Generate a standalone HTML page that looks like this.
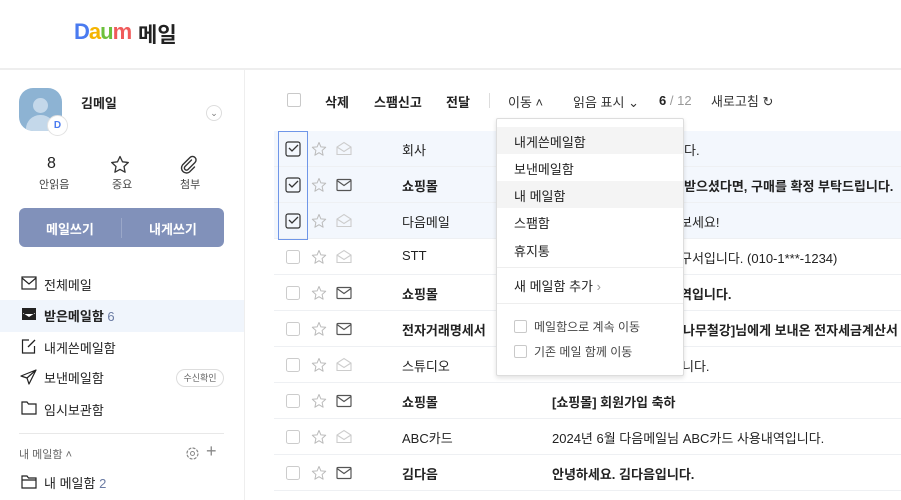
<!DOCTYPE html>
<html><head><meta charset="utf-8"><style>
*{margin:0;padding:0;box-sizing:border-box}
body{width:901px;height:500px;overflow:hidden;background:#fff;font-family:"Liberation Sans","Noto Sans CJK KR",sans-serif;color:#222;position:relative;font-size:14px}
.a{position:absolute;white-space:nowrap}
.row{position:absolute;left:274px;width:627px;height:36px;border-bottom:1px solid #eef0f3}
.sel{background:#f3f7fd}
.b{font-weight:bold}
.cb{position:absolute;width:14px;height:14px;border:1px solid #c9c9c9;border-radius:2px}
.menu div.i{position:absolute;left:17px;font-size:13px}
</style></head><body>
<div class="a" style="left:74px;top:19px;font-size:22px;font-weight:900;letter-spacing:-1px"><span style="color:#4a7bf0">D</span><span style="color:#f5b400">a</span><span style="color:#6cc03c">u</span><span style="color:#f05a5a">m</span></div>
<div class="a b" style="left:138px;top:19px;font-size:21px">메일</div>
<div class="a" style="left:0;top:68px;width:901px;height:2px;background:#eee"></div>
<div class="a" style="left:244px;top:70px;width:1px;height:430px;background:#eee"></div>
<div class="a" style="left:19px;top:88px;width:43px;height:43px;border-radius:14px;background:#8db3d3;overflow:hidden">
<div class="a" style="left:14px;top:10px;width:15px;height:15px;border-radius:50%;background:#c4d8ea"></div>
<div class="a" style="left:7px;top:27px;width:29px;height:22px;border-radius:14px 14px 0 0;background:#c4d8ea"></div></div>
<div class="a" style="left:47px;top:115px;width:21px;height:21px;border-radius:50%;background:#fff;border:1px solid #e2e2e2;font-size:10px;font-weight:bold;color:#4a7bf0;text-align:center;line-height:19px">D</div>
<div class="a b" style="left:81px;top:93px;font-size:13px">김메일</div>
<div class="a" style="left:206px;top:105px;width:16px;height:16px;border-radius:50%;border:1px solid #ddd;font-size:9px;color:#777;text-align:center;line-height:14px">⌄</div>
<div class="a" style="left:47px;top:155px;font-size:16px">8</div>
<div class="a" style="left:39px;top:176px;font-size:11px;color:#444">안읽음</div>
<svg class="a" style="left:110px;top:155px" width="20" height="19" viewBox="0 0 20 19"><path d="M10 1.5l2.5 5.3 5.8.7-4.3 4 1.1 5.7L10 14.4l-5.1 2.8 1.1-5.7-4.3-4 5.8-.7z" fill="none" stroke="#333" stroke-width="1.3" stroke-linejoin="round"/></svg>
<div class="a" style="left:112px;top:176px;font-size:11px;color:#444">중요</div>
<svg class="a" style="left:179px;top:155px" width="20" height="19" viewBox="0 0 20 19"><path d="M12.5 5L6 11.5a2 2 0 0 0 3 3L16 7.5a3.5 3.5 0 0 0-5-5L3.5 10a5 5 0 0 0 7 7l5-5" fill="none" stroke="#333" stroke-width="1.4" stroke-linecap="round"/></svg>
<div class="a" style="left:180px;top:176px;font-size:11px;color:#444">첨부</div>
<div class="a" style="left:19px;top:208px;width:205px;height:39px;border-radius:6px;background:#8191ba"></div>
<div class="a" style="left:121px;top:218px;width:1px;height:20px;background:#9aa7c8"></div>
<div class="a b" style="left:46px;top:219px;color:#fff;font-size:13px">메일쓰기</div>
<div class="a b" style="left:149px;top:219px;color:#fff;font-size:13px">내게쓰기</div>
<div class="a" style="left:0;top:300px;width:244px;height:32px;background:#f0f5fc"></div>
<svg class="a" style="left:21px;top:276px" width="16" height="14"><rect x="1" y="1" width="14" height="12" fill="none" stroke="#222" stroke-width="1.2"/><path d="M1 2l7 6 7-6" fill="none" stroke="#222" stroke-width="1.2"/></svg>
<div class="a" style="left:44px;top:275px;font-size:13px">전체메일</div>
<svg class="a" style="left:21px;top:307px" width="16" height="14"><rect x="1" y="1" width="14" height="12" fill="#222"/><path d="M2 6l6 4 6-4v1H2z" fill="#fff"/></svg>
<div class="a b" style="left:44px;top:306px;font-size:13px">받은메일함 <span style="color:#6a7ba3;font-weight:normal">6</span></div>
<svg class="a" style="left:21px;top:338px" width="16" height="16"><path d="M8 2H1.5v13h12V8" fill="none" stroke="#222" stroke-width="1.2"/><path d="M7 9l7-7" stroke="#222" stroke-width="1.3"/></svg>
<div class="a" style="left:44px;top:338px;font-size:13px">내게쓴메일함</div>
<svg class="a" style="left:20px;top:369px" width="17" height="16"><path d="M16 1L1 7l6 2 2 6z M7 9l9-8" fill="none" stroke="#222" stroke-width="1.2" stroke-linejoin="round"/></svg>
<div class="a" style="left:44px;top:368px;font-size:13px">보낸메일함</div>
<div class="a" style="left:176px;top:369px;width:48px;height:18px;border:1px solid #ddd;border-radius:9px;font-size:9px;color:#666;text-align:center;line-height:16px">수신확인</div>
<svg class="a" style="left:21px;top:401px" width="16" height="14"><path d="M1 1h5l1.5 2H15v10H1z" fill="none" stroke="#222" stroke-width="1.2"/></svg>
<div class="a" style="left:44px;top:400px;font-size:13px">임시보관함</div>
<div class="a" style="left:19px;top:433px;width:205px;height:1px;background:#e8e8e8"></div>
<div class="a" style="left:19px;top:446px;font-size:11px;color:#666">내 메일함 ˄</div>
<svg class="a" style="left:185px;top:446px" width="15" height="15"><circle cx="7.5" cy="7.5" r="5.5" fill="none" stroke="#888" stroke-width="1.2" stroke-dasharray="3 1.3"/><circle cx="7.5" cy="7.5" r="2" fill="none" stroke="#888"/></svg>
<div class="a" style="left:206px;top:441px;font-size:18px;color:#888">+</div>
<svg class="a" style="left:21px;top:475px" width="16" height="14"><path d="M1 1h5l1.5 2H15v10H1z M1 5h14" fill="none" stroke="#222" stroke-width="1.2"/></svg>
<div class="a" style="left:44px;top:473px;font-size:13px">내 메일함 <span style="color:#6a7ba3">2</span></div>
<div class="cb" style="left:287px;top:93px"></div>
<div class="a b" style="left:325px;top:92px;font-size:13px">삭제</div>
<div class="a b" style="left:374px;top:92px;font-size:13px">스팸신고</div>
<div class="a b" style="left:446px;top:92px;font-size:13px">전달</div>
<div class="a" style="left:489px;top:93px;width:1px;height:15px;background:#ddd"></div>
<div class="a" style="left:508px;top:92px;font-size:13px;color:#333">이동 ˄</div>
<div class="a" style="left:573px;top:92px;font-size:13px;color:#333">읽음 표시 ⌄</div>
<div class="a" style="left:659px;top:93px;font-size:13px"><b>6</b> <span style="color:#999">/ 12</span></div>
<div class="a" style="left:711px;top:91px;font-size:13px;color:#333">새로고침 ↻</div>
<div class="row sel" style="top:131px"></div>
<div class="row sel" style="top:167px"></div>
<div class="row sel" style="top:203px"></div>
<div class="row" style="top:239px"></div>
<div class="row" style="top:275px"></div>
<div class="row" style="top:311px"></div>
<div class="row" style="top:347px"></div>
<div class="row" style="top:383px"></div>
<div class="row" style="top:419px"></div>
<div class="row" style="top:455px"></div>
<div class="a" style="left:278px;top:131px;width:30px;height:109px;border:1px solid #6f96e8"></div>
<svg class="a" style="left:0;top:0" width="901" height="500">
<defs>
<g id="st"><path d="M0 -7 L1.9 -2.6 L6.7 -2.2 L3.1 1 L4.1 5.7 L0 3.2 L-4.1 5.7 L-3.1 1 L-6.7 -2.2 L-1.9 -2.6 Z" transform="translate(0,0.5)" fill="none" stroke="#bbb" stroke-width="1" stroke-linejoin="round"/></g>
<g id="ec"><rect x="-7" y="-5.5" width="14" height="11" rx="1" fill="none" stroke="#555" stroke-width="1.2"/><path d="M-7-4.5l7 5 7-5" fill="none" stroke="#555" stroke-width="1.2"/></g>
<g id="eo"><path d="M-7-2v7.5h14V-2l-7-4.5z M-7-2l7 4.5 7-4.5" fill="none" stroke="#ccc" stroke-width="1.1"/></g>
<g id="ck"><rect x="-7" y="-7" width="14" height="14" rx="2" fill="none" stroke="#333" stroke-width="1.2"/><path d="M-4-1l3 3 6-6" fill="none" stroke="#333" stroke-width="1.3"/></g>
<g id="cu"><rect x="-6.5" y="-6.5" width="13" height="13" rx="2" fill="none" stroke="#ccc" stroke-width="1"/></g>
</defs>
<use href="#ck" x="293" y="149"/><use href="#st" x="319" y="149"/><use href="#eo" x="344" y="149"/>
<use href="#ck" x="293" y="185"/><use href="#st" x="319" y="185"/><use href="#ec" x="344" y="185"/>
<use href="#ck" x="293" y="221"/><use href="#st" x="319" y="221"/><use href="#eo" x="344" y="221"/>
<use href="#cu" x="293" y="257"/><use href="#st" x="319" y="257"/><use href="#eo" x="344" y="257"/>
<use href="#cu" x="293" y="293"/><use href="#st" x="319" y="293"/><use href="#ec" x="344" y="293"/>
<use href="#cu" x="293" y="329"/><use href="#st" x="319" y="329"/><use href="#ec" x="344" y="329"/>
<use href="#cu" x="293" y="365"/><use href="#st" x="319" y="365"/><use href="#eo" x="344" y="365"/>
<use href="#cu" x="293" y="401"/><use href="#st" x="319" y="401"/><use href="#ec" x="344" y="401"/>
<use href="#cu" x="293" y="437"/><use href="#st" x="319" y="437"/><use href="#eo" x="344" y="437"/>
<use href="#cu" x="293" y="473"/><use href="#st" x="319" y="473"/><use href="#ec" x="344" y="473"/>
</svg>
<div class="a" style="left:402px;top:140px;font-size:13px">회사</div>
<div class="a b" style="left:402px;top:176px;font-size:13px">쇼핑몰</div>
<div class="a" style="left:402px;top:212px;font-size:13px">다음메일</div>
<div class="a" style="left:402px;top:248px;font-size:13px">STT</div>
<div class="a b" style="left:402px;top:284px;font-size:13px">쇼핑몰</div>
<div class="a b" style="left:402px;top:320px;font-size:13px">전자거래명세서</div>
<div class="a" style="left:402px;top:356px;font-size:13px">스튜디오</div>
<div class="a b" style="left:402px;top:392px;font-size:13px">쇼핑몰</div>
<div class="a" style="left:402px;top:428px;font-size:13px">ABC카드</div>
<div class="a b" style="left:402px;top:464px;font-size:13px">김다음</div>
<div class="a" style="left:684px;top:140px;font-size:13px">다.</div>
<div class="a b" style="left:684px;top:176px;font-size:13px">받으셨다면, 구매를 확정 부탁드립니다.</div>
<div class="a" style="left:680px;top:212px;font-size:13px">보세요!</div>
<div class="a" style="left:680px;top:248px;font-size:13px">구서입니다. (010-1***-1234)</div>
<div class="a b" style="left:680px;top:284px;font-size:13px">역입니다.</div>
<div class="a b" style="left:683px;top:320px;font-size:13px">나무철강]님에게 보내온 전자세금계산서</div>
<div class="a" style="left:682px;top:356px;font-size:13px">니다.</div>
<div class="a b" style="left:552px;top:392px;font-size:13px">[쇼핑몰] 회원가입 축하</div>
<div class="a" style="left:552px;top:428px;font-size:13px">2024년 6월 다음메일님 ABC카드 사용내역입니다.</div>
<div class="a b" style="left:552px;top:464px;font-size:13px">안녕하세요. 김다음입니다.</div>
<div class="a menu" style="left:496px;top:118px;width:188px;height:258px;background:#fff;border:1px solid #ddd;border-radius:2px;box-shadow:0 2px 5px rgba(0,0,0,.12)">
<div class="a" style="left:0;top:8px;width:186px;height:27px;background:#f4f4f4"></div>
<div class="a" style="left:0;top:62px;width:186px;height:27px;background:#f4f4f4"></div>
<div class="i a" style="top:13px">내게쓴메일함</div>
<div class="i a" style="top:40px">보낸메일함</div>
<div class="i a" style="top:67px">내 메일함</div>
<div class="i a" style="top:94px">스팸함</div>
<div class="i a" style="top:122px">휴지통</div>
<div class="a" style="left:0;top:148px;width:186px;height:1px;background:#eee"></div>
<div class="i a" style="top:157px">새 메일함 추가 <span style="color:#999">›</span></div>
<div class="a" style="left:0;top:184px;width:186px;height:1px;background:#eee"></div>
<div class="cb" style="left:17px;top:201px;width:13px;height:13px"></div>
<div class="a" style="left:37px;top:199px;font-size:12px;color:#444">메일함으로 계속 이동</div>
<div class="cb" style="left:17px;top:226px;width:13px;height:13px"></div>
<div class="a" style="left:37px;top:224px;font-size:12px;color:#444">기존 메일 함께 이동</div>
</div>
</body></html>
